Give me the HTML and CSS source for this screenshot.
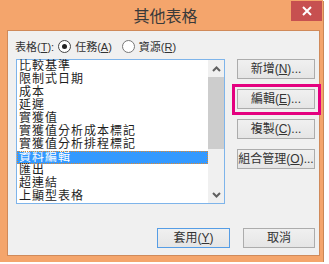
FILE: index.html
```html
<!DOCTYPE html>
<html lang="zh-Hant">
<head>
  <meta charset="UTF-8">
  <title>其他表格</title>
  <link rel="stylesheet" href="styles.css">
</head>
<body>
  <div id="window">
    <div class="titlebar">
      <span class="title">其他表格</span>
      <div class="close">
        <svg width="10" height="10" viewBox="0 0 10 10"><path d="M1 1 L9 9 M9 1 L1 9" stroke="#fff" stroke-width="2"/></svg>
      </div>
    </div>
    <div class="client">
      <div class="kind-row">
        <span class="label">表格(<u>T</u>):</span>
        <span class="radio checked"></span>
        <span class="label">任務(<u>A</u>)</span>
        <span class="radio"></span>
        <span class="label">資源(<u>R</u>)</span>
      </div>
      <div class="main">
        <div class="listbox">
          <div class="items">
            <div class="item">比較基準</div>
            <div class="item">限制式日期</div>
            <div class="item">成本</div>
            <div class="item">延遲</div>
            <div class="item">實獲值</div>
            <div class="item">實獲值分析成本標記</div>
            <div class="item">實獲值分析排程標記</div>
            <div class="item selected">資料編輯</div>
            <div class="item">匯出</div>
            <div class="item">超連結</div>
            <div class="item">上顯型表格</div>
          </div>
          <div class="scrollbar">
            <div class="arrow">
              <svg width="9" height="6" viewBox="0 0 9 6"><path d="M1 5 L4.5 1.5 L8 5" fill="none" stroke="#606060" stroke-width="2"/></svg>
            </div>
            <div class="track"><div class="thumb"></div></div>
            <div class="arrow">
              <svg width="9" height="6" viewBox="0 0 9 6"><path d="M1 1 L4.5 4.5 L8 1" fill="none" stroke="#606060" stroke-width="2"/></svg>
            </div>
          </div>
        </div>
        <div class="side">
          <button class="btn">新增(<u>N</u>)...</button>
          <div class="marked">
            <button class="btn">編輯(<u>E</u>)...</button>
          </div>
          <button class="btn">複製(<u>C</u>)...</button>
          <button class="btn">組合管理(<u>O</u>)...</button>
        </div>
      </div>
      <div class="footer">
        <button class="btn default">套用(<u>Y</u>)</button>
        <button class="btn cancel">取消</button>
      </div>
    </div>
  </div>
</body>
</html>
```

FILE: styles.css
```css
html, body {
  margin: 0;
  padding: 0;
}

body {
  background: #fff;
  font-family: "Liberation Sans", "Noto Sans CJK TC", sans-serif;
  font-size: 12px;
  color: #1e1e1e;
}

#window {
  width: 323px;
  height: 262px;
  box-sizing: border-box;
  background: #f4a56c;
  padding: 0 3px 6px 7px;
  box-shadow: 1px 1px 0 #c98756;
  display: flex;
  flex-direction: column;
}

.titlebar {
  position: relative;
  height: 30px;
  display: flex;
  align-items: center;
  justify-content: center;
}

.title {
  font-size: 16px;
  color: #3a3a3a;
  margin-left: 4px;
}

.close {
  position: absolute;
  top: 1px;
  right: -2px;
  width: 31px;
  height: 20px;
  background: #c75050;
  display: flex;
  align-items: center;
  justify-content: center;
}

.client {
  flex: 1;
  background: #f0f0f0;
  border: 1px solid #d08a5a;
  padding: 5px 0 0 7px;
}

.kind-row {
  height: 20px;
  display: flex;
  align-items: center;
  font-size: 11px;
  color: #333;
}

.label u,
.btn u {
  text-decoration: underline;
}

.radio {
  width: 11px;
  height: 11px;
  border: 1px solid #444;
  border-radius: 50%;
  background: #fff;
  margin: 0 4px 0 4px;
  position: relative;
}

.radio + .label + .radio {
  margin-left: 10px;
  border-color: #777;
}

.radio.checked::after {
  content: "";
  position: absolute;
  left: 3px;
  top: 3px;
  width: 5px;
  height: 5px;
  border-radius: 50%;
  background: #222;
}

.main {
  display: flex;
  margin-top: 3px;
}

.listbox {
  width: 209px;
  height: 145px;
  box-sizing: border-box;
  margin-left: 1px;
  border: 1px solid #7eb4ea;
  background: #fff;
  display: flex;
}

.items {
  flex: 1;
}

.item {
  height: 13px;
  line-height: 13px;
  padding-left: 2px;
  white-space: nowrap;
  letter-spacing: 1px;
}

.item.selected {
  background: #3399ff;
  color: #fff;
  outline: 1px dotted #e08a30;
  outline-offset: -1px;
}

.scrollbar {
  width: 16px;
  background: #f0f0f0;
  display: flex;
  flex-direction: column;
}

.arrow {
  height: 17px;
  display: flex;
  align-items: center;
  justify-content: center;
}

.track {
  flex: 1;
}

.thumb {
  height: 72px;
  background: #cdcdcd;
}

.side {
  margin-left: 12px;
  display: flex;
  flex-direction: column;
  gap: 10px;
}

.btn {
  width: 78px;
  height: 20px;
  box-sizing: border-box;
  padding: 0;
  border: 1px solid #acacac;
  background: linear-gradient(#f0f0f0, #e5e5e5);
  font-family: "Liberation Sans", "Noto Sans CJK TC", sans-serif;
  font-size: 12px;
  line-height: 18px;
  color: #333;
}

.marked {
  position: relative;
}

.marked::before {
  content: "";
  position: absolute;
  left: -5px;
  top: -5px;
  width: 89px;
  height: 31px;
  box-sizing: border-box;
  border: 3px solid #e4007f;
}

.marked .btn {
  display: block;
}

.footer {
  display: flex;
  gap: 13px;
  margin: 24px 0 0 142px;
}

.footer .btn {
  width: 72px;
}

.footer .btn.default {
  width: 73px;
  border-color: #569de5;
}
```
